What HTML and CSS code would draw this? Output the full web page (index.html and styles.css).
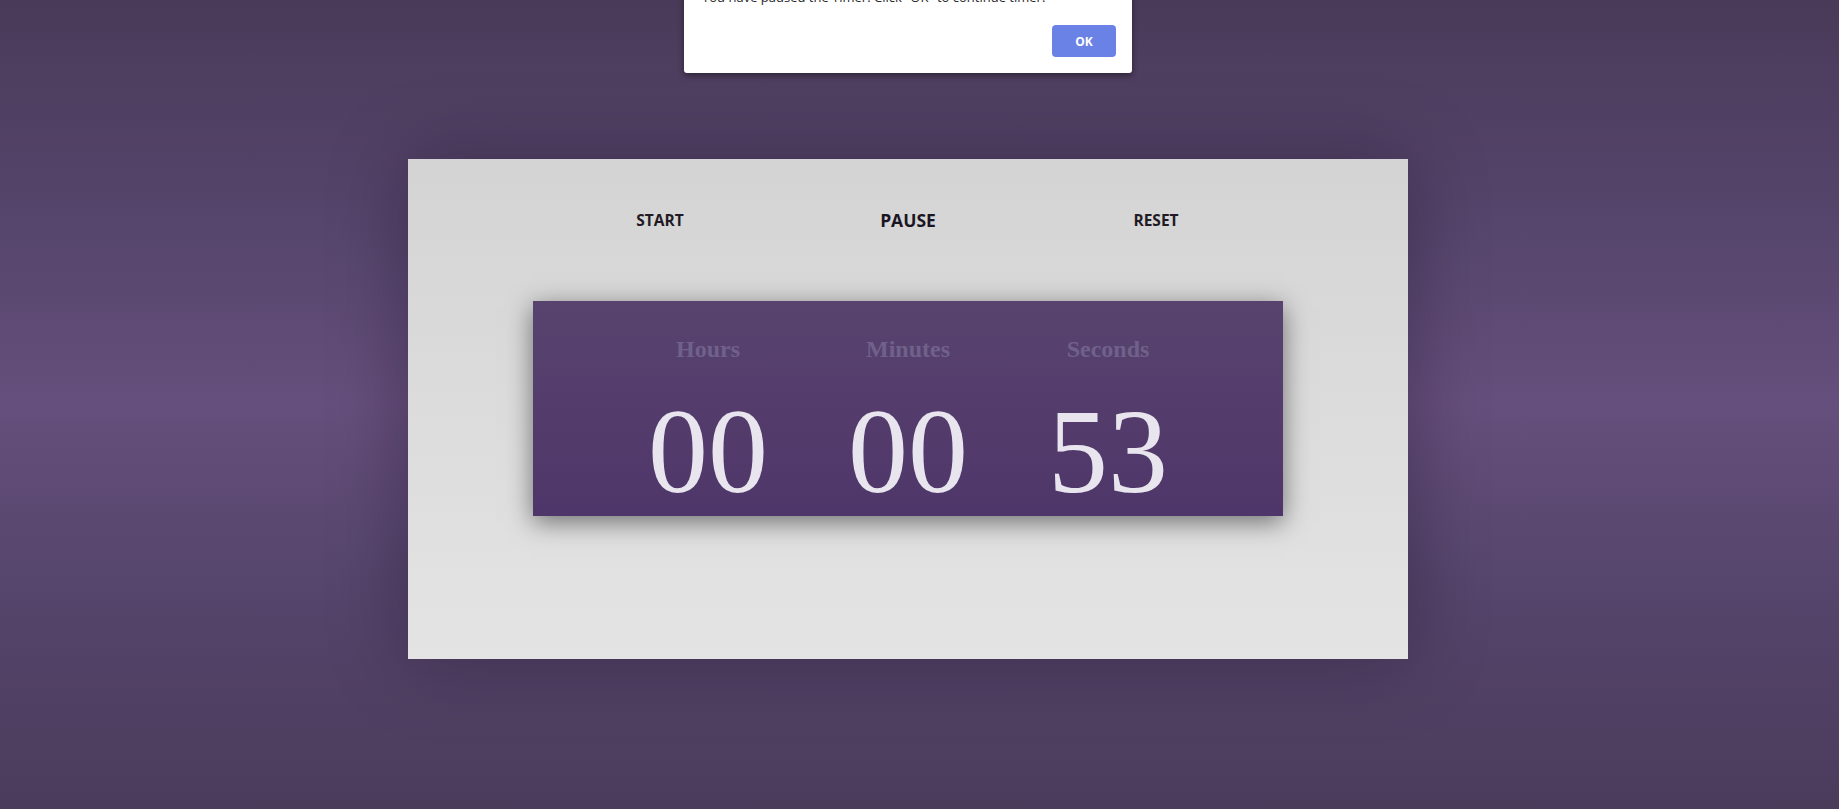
FILE: index.html
```html
<!DOCTYPE html>
<html>
<head>
<meta charset="utf-8">
<title>Timer</title>
<link rel="stylesheet" href="styles.css">
</head>
<body>
<div class="page">
  <div class="card">
    <nav class="controls">
      <span class="ctrl">START</span>
      <span class="ctrl ctrl-active">PAUSE</span>
      <span class="ctrl">RESET</span>
    </nav>
    <div class="clock">
      <div class="unit">
        <div class="label">Hours</div>
        <div class="value">00</div>
      </div>
      <div class="unit">
        <div class="label">Minutes</div>
        <div class="value">00</div>
      </div>
      <div class="unit">
        <div class="label">Seconds</div>
        <div class="value">53</div>
      </div>
    </div>
  </div>
</div>
<div class="dialog">
  <div class="dialog-msg">You have paused the Timer. Click "OK" to continue timer!</div>
  <div class="dialog-actions">
    <button class="dialog-ok">OK</button>
  </div>
</div>
</body>
</html>
```
FILE: styles.css
```css
html, body {
  margin: 0;
  padding: 0;
  height: 809px;
  overflow: hidden;
}
body {
  background: linear-gradient(to bottom, #4a3a59 0%, #56456c 28%, #654f7c 50%, #56456c 72%, #4b3b5b 100%);
  font-family: "Open Sans", "Liberation Sans", sans-serif;
}
.page {
  display: flex;
  flex-direction: column;
  align-items: flex-start;
  padding-top: 159px;
  padding-left: 408px;
}
.card {
  width: 1000px;
  height: 500px;
  background: linear-gradient(to bottom, #d4d4d4 0%, #e4e4e4 100%);
  box-shadow: 0 0 70px rgba(20, 10, 30, 0.35);
  display: flex;
  flex-direction: column;
  align-items: center;
}
.controls {
  margin-top: 41px;
  height: 40px;
  display: flex;
  justify-content: center;
  align-items: stretch;
}
.ctrl {
  width: 248px;
  line-height: 40px;
  text-align: center;
  font-size: 15.5px;
  font-weight: 700;
  color: #1f1a24;
}
.ctrl-active {
  font-size: 17.5px;
  font-weight: 700;
  color: #1a1524;
}
.clock {
  margin-top: 61px;
  width: 750px;
  height: 215px;
  box-sizing: border-box;
  padding-top: 33px;
  background: linear-gradient(to bottom, #58436e 0%, #4f366a 100%);
  box-shadow: 0 6px 24px rgba(0, 0, 0, 0.5);
  display: flex;
  justify-content: center;
}
.unit {
  width: 200px;
  display: flex;
  flex-direction: column;
  align-items: center;
  font-family: "Liberation Serif", "Times New Roman", serif;
}
.label {
  font-size: 24px;
  line-height: 30px;
  font-weight: 700;
  color: #70618b;
}
.value {
  margin-top: 28px;
  font-size: 120px;
  line-height: 120px;
  color: #e9e5ef;
}
.dialog {
  position: absolute;
  top: -28px;
  left: 684px;
  width: 448px;
  box-sizing: border-box;
  padding: 16px 16px 16px 18px;
  background: #ffffff;
  border-radius: 0 0 3px 3px;
  box-shadow: 0 2px 6px rgba(0, 0, 0, 0.45);
}
.dialog-msg {
  font-size: 13px;
  line-height: 18px;
  color: #2a2a2a;
}
.dialog-actions {
  margin-top: 19px;
  display: flex;
  justify-content: flex-end;
}
.dialog-ok {
  width: 64px;
  height: 32px;
  border: none;
  border-radius: 4px;
  background: #6a82e6;
  color: #ffffff;
  font-family: "Open Sans", "Liberation Sans", sans-serif;
  font-size: 12px;
  font-weight: 700;
  padding: 0;
}
```
